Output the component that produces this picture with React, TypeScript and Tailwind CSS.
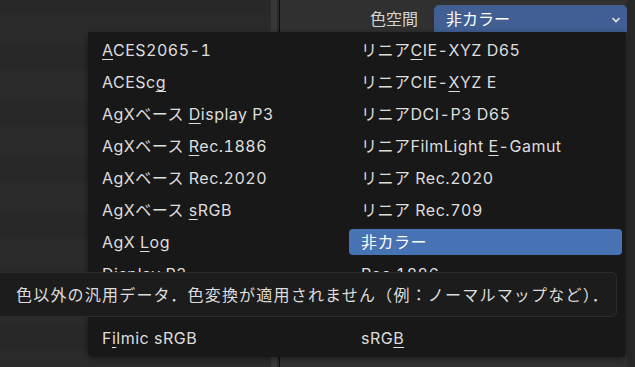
import React from 'react';

const font = { fontFamily: 'Inter, "Noto Sans CJK JP", sans-serif' };

type Item = { pre: string; key?: string; post?: string; active?: boolean };

const left: Item[] = [
  { pre: '', key: 'A', post: 'CES2065-1' },
  { pre: 'ACESc', key: 'g', post: '' },
  { pre: 'AgXベース ', key: 'D', post: 'isplay P3' },
  { pre: 'AgXベース ', key: 'R', post: 'ec.1886' },
  { pre: 'AgXベース Rec.2020' },
  { pre: 'AgXベース ', key: 's', post: 'RGB' },
  { pre: 'AgX ', key: 'L', post: 'og' },
  { pre: 'Display P3' },
  { pre: 'Filmic Log' },
  { pre: 'F', key: 'i', post: 'lmic sRGB' },
];

const right: Item[] = [
  { pre: 'リニア', key: 'C', post: 'IE-XYZ D65' },
  { pre: 'リニアCIE-', key: 'X', post: 'YZ E' },
  { pre: 'リニアDCI-P3 D65' },
  { pre: 'リニアFilmLight ', key: 'E', post: '-Gamut' },
  { pre: 'リニア Rec.2020' },
  { pre: 'リニア Rec.709' },
  { pre: '非カラー', active: true },
  { pre: 'Rec.1886' },
  { pre: 'Rec.2020' },
  { pre: 'sRG', key: 'B', post: '' },
];

function MenuItem({ item }: { item: Item }) {
  return (
    <div className="h-[32px] py-[3px]">
      <div
        className={
          item.active
            ? 'h-[26px] rounded-[4px] bg-[#4772b3] flex items-center px-3 text-white'
            : 'h-[26px] flex items-center px-3 text-[#dedede]'
        }
      >
        <span className="text-[16px] tracking-[0.5px] tabular-nums whitespace-nowrap">
          {item.pre}
          {item.key && <span className="underline underline-offset-[3px] decoration-1">{item.key}</span>}
          {item.post}
        </span>
      </div>
    </div>
  );
}

export default function App() {
  const stripes = Array.from({ length: 14 });
  return (
    <div className="relative w-[635px] h-[367px] overflow-hidden bg-[#303030]" style={font}>
      <div className="flex h-full">
        {/* left panel */}
        <div className="w-[271px] h-full flex flex-col -mt-[13px]">
          {stripes.map((_, i) => (
            <div key={i} className={i % 2 === 0 ? 'h-[28px] shrink-0 bg-[#282828]' : 'h-[28px] shrink-0 bg-[#2b2b2b]'} />
          ))}
        </div>
        <div className="w-[6px] h-full bg-[#383838]" />
        <div className="w-[2px] h-full bg-[#2a2a2a]" />
        <div className="w-px h-full bg-[#0e0e0e]" />
        {/* right panel */}
        <div className="flex-1 h-full bg-[#303030]">
          <div className="flex items-center justify-end pt-[5px] gap-4">
            <span className="text-[16px] text-[#d4d4d4]">色空間</span>
            <div className="w-[193px] h-[27px] rounded-t-[5px] bg-[#415f92] flex items-center pl-3 pr-[6px]">
              <span className="flex-1 text-[16px] text-white">非カラー</span>
              <svg width="10" height="8" viewBox="0 0 10 8" className="mt-[2px]">
                <polyline points="1.5,2 5,5.5 8.5,2" fill="none" stroke="#e8e8e8" strokeWidth="1.6" />
              </svg>
            </div>
          </div>
        </div>
        <div className="w-[8px] h-full bg-[#282828]" />
      </div>

      {/* dropdown menu */}
      <div className="absolute left-[88px] top-[32px] w-[538px] h-[325px] rounded-b-[5px] bg-[#181818] shadow-[0_2px_6px_rgba(0,0,0,0.4)] pl-[2px] pt-[2px]">
        <div className="grid grid-cols-[259px_273px]">
          <div>
            {left.map((it, i) => (
              <MenuItem key={i} item={it} />
            ))}
          </div>
          <div>
            {right.map((it, i) => (
              <MenuItem key={i} item={it} />
            ))}
          </div>
        </div>
      </div>

      {/* tooltip */}
      <div className="absolute left-[-4px] top-[272px] w-[621px] h-[45px] rounded-[5px] bg-[#1c1c1c] border border-[#2c2c2c] flex items-center pl-[19px]">
        <span className="text-[16px] text-[#dcdcdc] tracking-[1.2px] whitespace-nowrap">
          色以外の汎用データ．色変換が適用されません（例：ノーマルマップなど）．
        </span>
      </div>
    </div>
  );
}
